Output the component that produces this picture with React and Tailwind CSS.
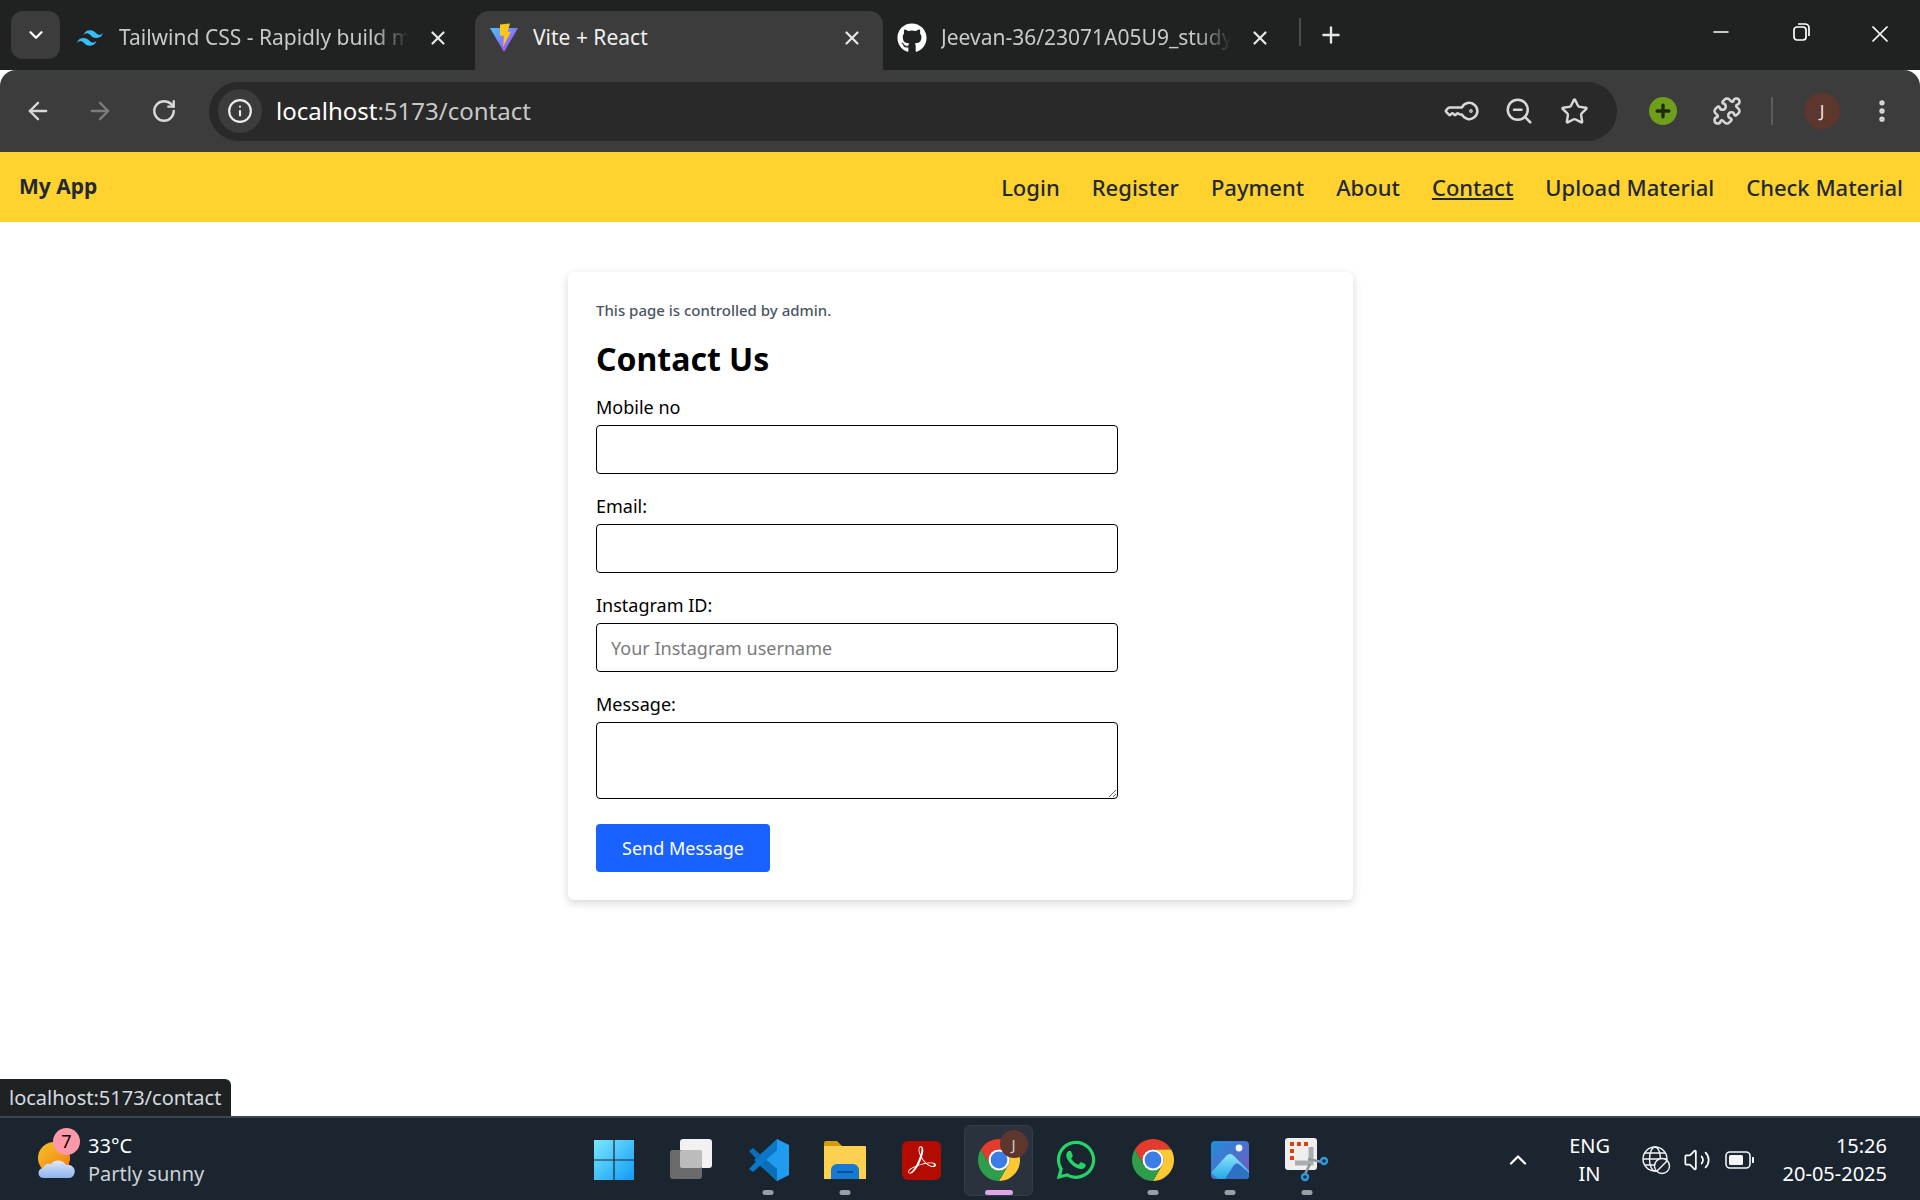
import { ArrowLeft, ArrowRight, RotateCw, Info, KeyRound, ZoomOut, Star, Puzzle, EllipsisVertical, ChevronDown, ChevronUp, X, Plus, Minus, Volume2 } from 'lucide-react';
import { FaGithub, FaWhatsapp } from 'react-icons/fa';
import { SiTailwindcss, SiAdobeacrobatreader } from 'react-icons/si';

const ChromeLogo = ({ size = 42 }) => (
  <svg width={size} height={size} viewBox="2 2 44 44">
    <path d="M4.95 13A22 22 0 0 1 43.05 13H24A11 11 0 0 0 14.5 29.5Z" fill="#e33b2e" />
    <path d="M43.05 13A22 22 0 0 1 24 46L33.5 29.5A11 11 0 0 0 24 13Z" fill="#fcc934" />
    <path d="M24 46A22 22 0 0 1 4.95 13L14.5 29.5A11 11 0 0 0 33.5 29.5Z" fill="#2e9e4a" />
    <circle cx="24" cy="24" r="11" fill="#fff" />
    <circle cx="24" cy="24" r="8.8" fill="#3b7de8" />
  </svg>
);

const ViteLogo = () => (
  <svg width="30" height="30" viewBox="0 0 30 30">
    <defs>
      <linearGradient id="viteBase" x1="0" y1="0" x2="1" y2="1">
        <stop offset="0" stopColor="#41c7ff" />
        <stop offset="1" stopColor="#bd34fe" />
      </linearGradient>
    </defs>
    <path d="M1 5 L29 5 L15 29 Z" fill="url(#viteBase)" />
    <path d="M11 1.5 L21 0.5 L18.5 9 L22 8.5 L14 24 L15 12.5 L11 13 Z" fill="#ffc517" />
  </svg>
);

const WindowsLogo = () => (
  <svg width="42" height="42" viewBox="0 0 42 42">
    <defs>
      <linearGradient id="winBlue" x1="0" y1="0" x2="1" y2="1">
        <stop offset="0" stopColor="#7ce8ff" />
        <stop offset="1" stopColor="#0f9bf5" />
      </linearGradient>
    </defs>
    <path d="M1 1H20.4V20.4H1ZM21.6 1H41V20.4H21.6ZM1 21.6H20.4V41H1ZM21.6 21.6H41V41H21.6Z" fill="url(#winBlue)" />
  </svg>
);

const TaskView = () => (
  <svg width="44" height="42" viewBox="0 0 44 42">
    <rect x="11" y="0" width="32" height="29" rx="3" fill="#f1f1f1" />
    <rect x="1" y="11" width="32" height="29" rx="3" fill="#6b6b6b" />
    <rect x="11" y="11" width="22" height="18" rx="2" fill="#bcbcbc" />
  </svg>
);

const VsCode = () => (
  <svg width="44" height="44" viewBox="0 0 44 44">
    <path d="M31 1 L43 7 V37 L31 43 L12 24 L31 9Z" fill="#1f9cf0" />
    <path d="M31 1 L8 22 L31 43 V31 L19 22 L31 12Z" fill="#0a78c7" />
    <path d="M3 13 L7 10 L31 31 V43 Z" fill="#0a6fb8" />
    <path d="M3 31 L7 34 L31 12 V1 Z" fill="#0a78c7" />
  </svg>
);

const Folder = () => (
  <svg width="44" height="40" viewBox="0 0 44 40">
    <path d="M1 3a2 2 0 0 1 2-2h11l5 5h-18Z" fill="#d49b0a" />
    <path d="M1 6h41a1 1 0 0 1 1 1v32H1Z" fill="#fdd04f" />
    <path d="M8 39V30a6 6 0 0 1 6-6h16a6 6 0 0 1 6 6v9Z" fill="#1679d4" />
    <rect x="14" y="31" width="16" height="2" fill="#0c4f96" />
  </svg>
);

const PhotosIcon = () => (
  <svg width="38" height="38" viewBox="0 0 38 38">
    <defs>
      <linearGradient id="photosBg" x1="0" y1="0" x2="1" y2="1">
        <stop offset="0" stopColor="#1c8fdc" />
        <stop offset="1" stopColor="#7a55c4" />
      </linearGradient>
      <linearGradient id="photosHill" x1="0" y1="0" x2="0" y2="1">
        <stop offset="0" stopColor="#8fe4fb" />
        <stop offset="1" stopColor="#26a6e8" />
      </linearGradient>
    </defs>
    <rect width="38" height="38" rx="4" fill="url(#photosBg)" />
    <circle cx="28" cy="7" r="3.4" fill="#f4f4f4" />
    <path d="M0 32 L15 15 Q19 11 23 15 L38 30 V34 a4 4 0 0 1-4 4H7Z" fill="url(#photosHill)" />
    <path d="M14 38 L23 24 Q26 21 29 24 L38 32 V34 a4 4 0 0 1-4 4Z" fill="#2f6fc4" />
  </svg>
);

const SnipIcon = () => (
  <svg width="44" height="44" viewBox="0 0 44 44">
    <rect x="0" y="0" width="32" height="32" rx="3" fill="#efefef" />
    <path d="M5 4h4v4H5ZM12 4h4v4h-4ZM19 4h4v4h-4ZM5 11h4v4H5ZM5 18h4v4H5Z" fill="#d8420f" />
    <path d="M10 25H26V9" fill="none" stroke="#a9adb0" strokeWidth="5" />
    <path d="M23 21 L37 24 M25 26 L20 36" stroke="#8f9598" strokeWidth="2.5" />
    <circle cx="39" cy="23" r="3" fill="none" stroke="#2a9be0" strokeWidth="2.4" />
    <circle cx="20" cy="39" r="3" fill="none" stroke="#2a9be0" strokeWidth="2.4" />
  </svg>
);

const WeatherIcon = () => (
  <svg width="40" height="38" viewBox="0 0 40 38">
    <defs>
      <linearGradient id="sunFill" x1="0" y1="0" x2="1" y2="1">
        <stop offset="0" stopColor="#f6c22a" />
        <stop offset="1" stopColor="#f47a0e" />
      </linearGradient>
      <linearGradient id="cloudFill" x1="0" y1="0" x2="0" y2="1">
        <stop offset="0" stopColor="#dfe9fb" />
        <stop offset="1" stopColor="#8eb3ee" />
      </linearGradient>
    </defs>
    <circle cx="17" cy="17" r="16" fill="url(#sunFill)" />
    <path d="M7 37a5 5 0 0 1-1-10 7 7 0 0 1 8-4 9 9 0 0 1 15 1 6.500 6.500 0 0 1 4 13Z" fill="url(#cloudFill)" />
  </svg>
);

const GlobeOff = () => (
  <svg width="29" height="29" viewBox="0 0 29 29" fill="none" stroke="#f3f4f6" strokeWidth="1.4">
    <circle cx="13" cy="13" r="12" />
    <ellipse cx="13" cy="13" rx="5.500" ry="12" />
    <path d="M1 13H25M3 7H23M3 19H16" />
    <circle cx="20" cy="20" r="7.500" fill="#1b2530" />
    <path d="M15 25L25 15" />
  </svg>
);

const Battery = () => (
  <svg width="30" height="20" viewBox="0 0 30 20" fill="none">
    <rect x="1" y="2" width="24" height="16" rx="4" stroke="#f3f4f6" strokeWidth="1.600" />
    <rect x="4" y="5" width="14" height="10" rx="1.500" fill="#f3f4f6" />
    <path d="M27 7h1a1 1 0 0 1 1 1v4a1 1 0 0 1-1 1h-1Z" fill="#f3f4f6" />
  </svg>
);

const Tab = ({ icon, title, active, faded }) => (
  <div className={`flex items-center h-[59px] pb-[6px] pl-[14px] pr-[20px] w-[408px] rounded-t-[14px] ${active ? 'bg-[#3c3c3c] text-[#f1f1f1] pl-[12px]' : 'text-[#c9c9c9]'}`}>
    <span className="w-[30px] flex justify-center shrink-0">{icon}</span>
    <span className={`ml-[14px] flex-1 text-[21px] whitespace-nowrap overflow-hidden ${faded ? '[mask-image:linear-gradient(to_right,black_88%,transparent)]' : ''}`}>{title}</span>
    <X size={22} strokeWidth={2.4} className="ml-[18px] text-[#e8e8e8] shrink-0" />
  </div>
);

const NavLink = ({ children, current }) => (
  <a className={`text-[22px] font-medium text-[#1f2937] ${current ? 'underline' : ''}`}>{children}</a>
);

const Field = ({ label, placeholder }) => (
  <div className="mb-[20px]">
    <label className="block text-[18px] leading-[24px] mb-[6px] text-black">{label}</label>
    <input placeholder={placeholder} className="block w-[522px] h-[49px] px-[14px] text-[18px] border border-black rounded-[4px] placeholder:text-[#7b7b7b]" />
  </div>
);

const TaskItem = ({ children, dot, active }) => (
  <div className={`relative w-[77px] h-[84px] flex items-center justify-center`}>
    {active && <div className="absolute left-[4px] right-[4px] top-[7px] bottom-[6px] rounded-[6px] bg-[#2a323d] border border-[#333b46]" />}
    <div className="relative">{children}</div>
    {dot && <div className="absolute bottom-[7px] left-1/2 -translate-x-1/2 w-[11px] h-[5px] rounded-full bg-[#9a9fa6]" />}
    {active && <div className="absolute bottom-[7px] left-1/2 -translate-x-1/2 w-[28px] h-[5px] rounded-full bg-[#e3a3e8]" />}
  </div>
);

const App = () => {
  return (
    <div className="h-screen w-screen flex flex-col overflow-hidden bg-white font-['Noto_Sans',sans-serif]">
      {/* tab strip */}
      <div className="h-[70px] bg-[#202222] flex items-end shrink-0">
        <div className="mb-[11px] ml-[11px] w-[49px] h-[48px] rounded-[12px] bg-[#3c3c3c] flex items-center justify-center text-white shrink-0">
          <ChevronDown size={22} strokeWidth={2.5} />
        </div>
        <div className="flex ml-[12px] mr-[2px] -mr-[3px]">
          <div className="w-[414px] -ml-[11px]">
            <Tab icon={<SiTailwindcss size={26} className="text-[#38bdf8]" />} title="Tailwind CSS - Rapidly build mo" faded />
          </div>
          <Tab icon={<ViteLogo />} title="Vite + React" active />
          <div className="w-[420px] -mr-[12px]">
            <Tab icon={<FaGithub size={30} className="text-white" />} title="Jeevan-36/23071A05U9_studycircle" faded />
          </div>
        </div>
        <div className="mb-[24px] w-[2px] h-[28px] bg-[#4b4d4d] ml-[6px]" />
        <Plus size={26} strokeWidth={2.2} className="mb-[22px] ml-[17px] text-[#e6e6e6]" />
        <div className="ml-auto flex mb-[22px] text-white">
          <div className="w-[80px] flex justify-center"><Minus size={24} strokeWidth={1.6} /></div>
          <div className="w-[80px] flex justify-center">
            <svg width="24" height="24" viewBox="0 0 24 24" fill="none" stroke="currentColor" strokeWidth="1.700">
              <rect x="5" y="7" width="12" height="13" rx="3" />
              <path d="M9 4h7a4 4 0 0 1 4 4v8" />
            </svg>
          </div>
          <div className="w-[78px] mr-[1px] flex justify-center"><X size={28} strokeWidth={1.5} /></div>
        </div>
      </div>

      {/* toolbar */}
      <div className="h-[82px] bg-[#3c3c3c] rounded-t-[16px] flex items-center shrink-0 text-[#d8d8d8]">
        <ArrowLeft size={28} strokeWidth={2} className="ml-[24px]" />
        <ArrowRight size={28} strokeWidth={2} className="ml-[34px] text-[#7c7c7c]" />
        <RotateCw size={26} strokeWidth={2.2} className="ml-[37px]" />
        <div className="ml-[32px] w-[1408px] h-[59px] rounded-full bg-[#292929] flex items-center">
          <div className="ml-[9px] w-[44px] h-[44px] rounded-full bg-[#3c3c3c] flex items-center justify-center">
            <Info size={26} strokeWidth={2} className="text-[#ececec]" />
          </div>
          <div className="ml-[14px] text-[24px] text-[#c8c8c8]"><span className="text-white">localhost</span>:5173/contact</div>
          <div className="ml-auto flex items-center mr-[28px] gap-[26px]">
            <KeyRound size={30} strokeWidth={2} className="rotate-[45deg]" />
            <ZoomOut size={30} strokeWidth={2} />
            <Star size={29} strokeWidth={2} />
          </div>
        </div>
        <div className="ml-[32px] w-[28px] h-[28px] rounded-full bg-[#6f9e1d] flex items-center justify-center">
          <Plus size={20} strokeWidth={4} className="text-[#1d2b0a]" />
        </div>
        <Puzzle size={30} strokeWidth={2} className="ml-[35px]" />
        <div className="ml-[29px] w-[2px] h-[28px] bg-[#5d5d5d]" />
        <div className="ml-[31px] w-[36px] h-[36px] rounded-full bg-[#5d372e] flex items-center justify-center text-[17px] text-[#f0e5e2]">J</div>
        <EllipsisVertical size={28} strokeWidth={2.6} className="ml-[28px]" />
      </div>

      {/* yellow nav */}
      <div className="h-[70px] bg-[#ffd22e] flex items-center justify-between pl-[19px] pr-[17px] shrink-0">
        <div className="text-[21px] font-bold text-[#1f2937]">My App</div>
        <div className="flex gap-[32px]">
          <NavLink>Login</NavLink>
          <NavLink>Register</NavLink>
          <NavLink>Payment</NavLink>
          <NavLink>About</NavLink>
          <NavLink current>Contact</NavLink>
          <NavLink>Upload Material</NavLink>
          <NavLink>Check Material</NavLink>
        </div>
      </div>

      {/* page body */}
      <div className="flex-1 relative pt-[50px]">
        <div className="w-[785px] ml-[568px] p-[28px] pt-[26px] bg-white rounded-[6px] shadow-[0_3px_10px_rgba(0,0,0,0.16)]">
          <p className="text-[15px] leading-[24px] font-medium text-[#4b5563]">This page is controlled by admin.</p>
          <h1 className="text-[32px] leading-[44px] font-bold text-black mt-[15px] mb-[14px]">Contact Us</h1>
          <Field label="Mobile no" />
          <Field label="Email:" />
          <Field label="Instagram ID:" placeholder="Your Instagram username" />
          <div className="mb-[25px]">
            <label className="block text-[18px] leading-[24px] mb-[6px] text-black">Message:</label>
            <textarea className="block w-[522px] h-[77px] border border-black rounded-[4px]" />
          </div>
          <button className="w-[174px] h-[48px] bg-[#1a62ff] rounded-[4px] text-white text-[18px]">Send Message</button>
        </div>
        <div className="absolute left-0 bottom-0 h-[37px] w-[231px] bg-[#1f2222] rounded-tr-[6px] text-[#d5dae0] text-[20px] flex items-center pl-[9px] whitespace-nowrap">localhost:5173/contact</div>
      </div>

      {/* taskbar */}
      <div className="h-[84px] bg-[#1b2530] border-t-2 border-[#3b444f] grid grid-cols-[1fr_auto_1fr] items-center shrink-0 text-white">
        <div className="flex items-center pl-[37px]">
          <div className="relative w-[40px] h-[38px]">
            <WeatherIcon />
            <div className="absolute -top-[13px] left-[16px] w-[27px] h-[27px] rounded-full bg-[#ff99a8] text-black text-[18px] flex items-center justify-center">7</div>
          </div>
          <div className="ml-[11px] leading-[28px]">
            <div className="text-[20px]">33°C</div>
            <div className="text-[20px] text-[#cdd2d8]">Partly sunny</div>
          </div>
        </div>
        <div className="flex">
          <TaskItem><WindowsLogo /></TaskItem>
          <TaskItem><TaskView /></TaskItem>
          <TaskItem dot><VsCode /></TaskItem>
          <TaskItem dot><Folder /></TaskItem>
          <TaskItem>
            <div className="w-[39px] h-[39px] rounded-[6px] bg-[#b30b00] flex items-center justify-center">
              <SiAdobeacrobatreader size={28} className="text-white" />
            </div>
          </TaskItem>
          <TaskItem active>
            <div className="relative">
              <ChromeLogo />
              <div className="absolute -top-[9px] -right-[8px] w-[28px] h-[28px] rounded-full bg-[#5d372e] text-[#d9c6c0] text-[15px] flex items-center justify-center">J</div>
            </div>
          </TaskItem>
          <TaskItem><FaWhatsapp size={44} className="text-[#25d366]" /></TaskItem>
          <TaskItem dot><ChromeLogo /></TaskItem>
          <TaskItem dot><PhotosIcon /></TaskItem>
          <TaskItem dot><SnipIcon /></TaskItem>
        </div>
        <div className="flex items-center justify-end pr-[33px]">
          <ChevronUp size={28} strokeWidth={2} />
          <div className="ml-[34px] w-[48px] text-center text-[20px] leading-[28px]">
            <div>ENG</div>
            <div>IN</div>
          </div>
          <div className="ml-[28px]"><GlobeOff /></div>
          <Volume2 size={28} strokeWidth={1.5} className="ml-[12px]" />
          <div className="ml-[14px]"><Battery /></div>
          <div className="ml-[28px] text-right text-[20px] leading-[28px]">
            <div>15:26</div>
            <div>20-05-2025</div>
          </div>
        </div>
      </div>
    </div>
  );
};

export default App;
